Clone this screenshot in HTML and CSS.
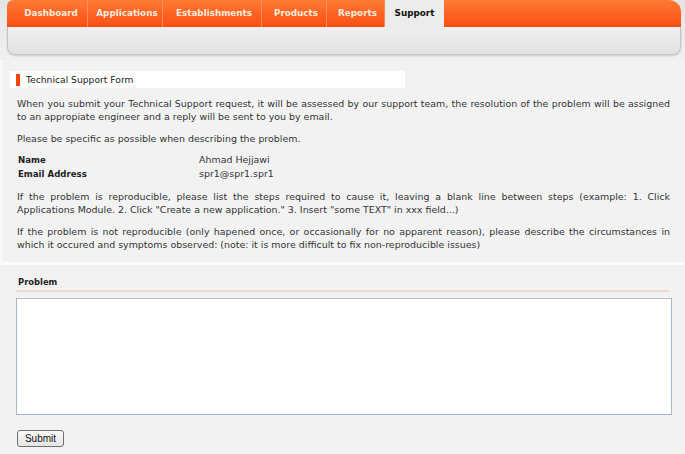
FILE: index.html
```html
<!DOCTYPE html>
<html lang="en">
<head>
    <meta charset="UTF-8">
    <title>Support</title>
    <link rel="stylesheet" href="styles.css">
</head>
<body>

    <div class="header">
        <ul class="tabs">
            <li><a href="#">Dashboard</a></li>
            <li><a href="#">Applications</a></li>
            <li><a href="#">Establishments</a></li>
            <li><a href="#">Products</a></li>
            <li><a href="#">Reports</a></li>
            <li class="active"><a href="#">Support</a></li>
        </ul>
        <div class="subbar"></div>
    </div>

    <div class="panel intro">
        <div class="form-title"><span class="marker"></span>Technical Support Form</div>

        <p>When you submit your Technical Support request, it will be assessed by our support team, the resolution of the problem will be assigned to an appropiate engineer and a reply will be sent to you by email.</p>
        <p>Please be specific as possible when describing the problem.</p>

        <table class="info">
            <tr><th>Name</th><td>Ahmad Hejjawi</td></tr>
            <tr><th>Email Address</th><td>spr1@spr1.spr1</td></tr>
        </table>

        <p>If the problem is reproducible, please list the steps required to cause it, leaving a blank line between steps (example: 1. Click Applications Module. 2. Click "Create a new application." 3. Insert "some TEXT" in xxx field...)</p>
        <p>If the problem is not reproducible (only hapened once, or occasionally for no apparent reason), please describe the circumstances in which it occured and symptoms observed: (note: it is more difficult to fix non-reproducible issues)</p>
    </div>

    <div class="panel problem">
        <h3>Problem</h3>
        <textarea id="problem"></textarea>
        <button class="btn-submit">Submit</button>
    </div>

</body>
</html>
```

FILE: styles.css
```css
body {
    margin: 0;
    background: #f2f2f2;
    font-family: "DejaVu Sans", Verdana, sans-serif;
    font-size: 9.45px;
    color: #333;
}
.header {
    background: linear-gradient(#e4e4e4, #f0f0f0);
    padding: 0 4px 5px 7px;
}
.tabs {
    display: flex;
    list-style: none;
    margin: 0;
    padding: 0;
    height: 27px;
    background: linear-gradient(#ff7a36, #fb4e12);
    border-radius: 6px 12px 0 0;
}
.tabs li {
    border-right: 1px solid #ff8c5c;
}
.tabs li:nth-child(1) { width: 80px; }
.tabs li:nth-child(2) { width: 74px; }
.tabs li:nth-child(3) { width: 98px; }
.tabs li:nth-child(4) { width: 64px; }
.tabs li:nth-child(5) { width: 57px; }
.tabs li.active {
    width: 59px;
    border-right: none;
    background: #ececec;
    height: 30px;
    position: relative;
    z-index: 1;
}
.tabs a {
    display: block;
    text-align: center;
    padding-left: 4px;
    line-height: 27px;
    font-weight: bold;
    font-size: 8.8px;
    color: #ffeadc;
    text-decoration: none;
}
.tabs li:nth-child(1) a { padding-left: 8px; }
.tabs li.active a {
    color: #111;
    padding-left: 0;
}
.subbar {
    height: 27px;
    background: linear-gradient(#f0f0f0, #e2e2e2);
    border: 1px solid #c4c4c4;
    border-top: none;
    border-radius: 0 0 8px 8px;
    box-shadow: 0 1px 2px rgba(0, 0, 0, 0.15);
}
.panel {
    background: #f2f2f2;
}
.intro {
    padding: 11px 15px 11px 15px;
    border-left: 2px solid #fafafa;
    border-bottom: 3px solid #fbfbfb;
}
.form-title {
    display: flex;
    align-items: center;
    width: 389px;
    height: 17px;
    margin-left: -7px;
    padding-left: 6px;
    background: #fff;
    color: #222;
    font-size: 9.2px;
}
.marker {
    width: 4px;
    height: 12px;
    background: #f2470f;
    margin-right: 6px;
}
p {
    margin: 9px 0 0;
    line-height: 13px;
    text-align: justify;
}
.info {
    border-collapse: collapse;
    margin: 8px 0 0 1px;
}
.info th {
    text-align: left;
    width: 181px;
    padding: 0;
    line-height: 14px;
    font-size: 8.6px;
    color: #222;
}
.info td {
    padding: 0;
    line-height: 14px;
}
.problem {
    padding: 12px 13px 6px 16px;
}
.problem h3 {
    margin: 0;
    font-size: 8.4px;
    color: #222;
    padding: 0 0 3px 2px;
    border-bottom: 2px solid #f4d8c8;
    box-shadow: 0 2px 0 #eaf2f8;
    margin-right: 3px;
}
.problem textarea {
    display: block;
    box-sizing: border-box;
    width: 656px;
    height: 117px;
    margin-top: 6px;
    border: 1px solid #a8b6c6;
    border-top-color: #c0c0c0;
    background: #fff;
    resize: none;
}
.btn-submit {
    margin: 15px 0 0 1px;
    width: 47px;
    height: 17px;
    padding: 0;
    font-family: "Liberation Sans", Arial, sans-serif;
    font-size: 10px;
    color: #111;
    background: linear-gradient(#fafafa, #e4e4e4);
    border: 1px solid #707070;
    border-radius: 3px;
}
```
